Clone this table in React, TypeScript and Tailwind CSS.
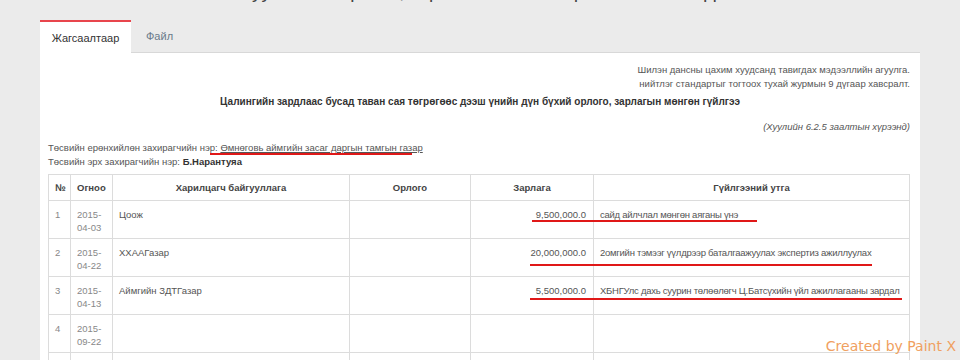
import React from 'react';

const rows = [
    { no: '1', date: ['2015-', '04-03'], org: 'Цоож', out: '9,500,000.0', desc: 'сайд айлчлал мөнгөн аяганы үнэ' },
    { no: '2', date: ['2015-', '04-22'], org: 'ХХААГазар', out: '20,000,000.0', desc: '2омгийн тэмээг үүлдрээр баталгаажуулах экспертиз ажиллуулах' },
    { no: '3', date: ['2015-', '04-13'], org: 'Аймгийн ЗДТГазар', out: '5,500,000.0', desc: 'ХБНГУлс дахь суурин төлөөлөгч Ц.Батсүхийн үйл ажиллагааны зардал' },
    { no: '4', date: ['2015-', '09-22'], org: '', out: '', desc: '' },
    { no: '', date: ['', ''], org: '', out: '', desc: '' },
];

export default function App() {
    return (
        <div className="relative h-[360px] w-[960px] overflow-hidden bg-[#ebebeb] font-['Liberation_Sans',Arial,sans-serif] text-[#555]">
            {/* Cut-off page heading */}
            <div className="-mt-[18px] h-[38px] text-center text-[19px] leading-[20px] text-[#444]">
                Төсвийн байгууллагын орлого, зарлагын мөнгөн гүйлгээ ба санхүүгийн тайлан
            </div>

            <div className="ml-[40px] w-[880px]">
                {/* Tabs */}
                <div className="flex h-[33px] items-stretch">
                    <div className="flex w-[91px] items-center justify-center border-t-2 border-[#e8454c] bg-white pt-[1px] text-[11px] text-[#333]">
                        Жагсаалтаар
                    </div>
                    <div className="flex flex-1 items-center border-b border-[#d8d8d8] pl-[15px] text-[11px] text-[#6a7a8a]">
                        Файл
                    </div>
                </div>

                {/* Panel */}
                <div className="h-[400px] bg-white px-[8px] pt-[10px]">
                    <div className="pr-[2px] text-right text-[9.5px] leading-[14px]">
                        <div>Шилэн дансны цахим хуудсанд тавигдах мэдээллийн агуулга.</div>
                        <div>нийтлэг стандартыг тогтоох тухай журмын 9 дүгаар хавсралт.</div>
                    </div>
                    <div className="mt-[4px] text-center text-[10px] font-bold leading-[14px] text-[#333]">
                        Цалингийн зардлаас бусад таван сая төгрөгөөс дээш үнийн дүн бүхий орлого, зарлагын мөнгөн гүйлгээ
                    </div>
                    <div className="mt-[11px] pr-[2px] text-right text-[9.5px] italic leading-[14px]">
                        (Хуулийн 6.2.5 заалтын хүрээнд)
                    </div>

                    <div className="mt-[7px] text-[9.5px] leading-[14px]">
                        <div className="relative">
                            Төсвийн ерөнхийлөн захирагчийн нэр:{' '}
                            <span className="underline">Өмнөговь аймгийн засаг даргын тамгын газар</span>
                            <div className="absolute left-[162px] top-[12px] h-[2px] w-[202px] bg-[#e01818]" />
                        </div>
                        <div>
                            Төсвийн эрх захирагчийн нэр: <span className="font-bold text-[#333]">Б.Нарантуяа</span>
                        </div>
                    </div>

                    {/* Table */}
                    <div className="relative mt-[5px] w-[862px]">
                        <table className="w-full table-fixed border-collapse text-[9.5px] leading-[13px]">
                            <colgroup>
                                <col className="w-[22px]" />
                                <col className="w-[42px]" />
                                <col className="w-[237px]" />
                                <col className="w-[121px]" />
                                <col className="w-[123px]" />
                                <col />
                            </colgroup>
                            <thead>
                                <tr className="h-[26px] font-bold text-[#444]">
                                    <th className="border border-[#dcdcdc] px-[6px] text-left">№</th>
                                    <th className="border border-[#dcdcdc] px-[6px] text-left">Огноо</th>
                                    <th className="border border-[#dcdcdc] text-center">Харилцагч байгууллага</th>
                                    <th className="border border-[#dcdcdc] text-center">Орлого</th>
                                    <th className="border border-[#dcdcdc] text-center">Зарлага</th>
                                    <th className="border border-[#dcdcdc] text-center">Гүйлгээний утга</th>
                                </tr>
                            </thead>
                            <tbody>
                                {rows.map((r, i) => (
                                    <tr key={i} className="h-[38px] align-top">
                                        <td className="border border-[#dcdcdc] px-[6px] pt-[7px] text-[#888]">{r.no}</td>
                                        <td className="border border-[#dcdcdc] px-[6px] pt-[7px] text-[#888]">
                                            {r.date[0]}
                                            <br />
                                            {r.date[1]}
                                        </td>
                                        <td className="border border-[#dcdcdc] px-[6px] pt-[7px]">{r.org}</td>
                                        <td className="border border-[#dcdcdc] px-[6px] pt-[7px]" />
                                        <td className="border border-[#dcdcdc] px-[7px] pt-[7px] text-right">{r.out}</td>
                                        <td className="whitespace-nowrap border border-[#dcdcdc] px-[6px] pt-[7px] tracking-[-0.25px]">{r.desc}</td>
                                    </tr>
                                ))}
                            </tbody>
                        </table>

                        {/* Red annotation lines */}
                        <div className="absolute left-[484px] top-[46px] h-[2px] w-[225px] bg-[#e01818]" />
                        <div className="absolute left-[482px] top-[90px] h-[2px] w-[342px] bg-[#e01818]" />
                        <div className="absolute left-[482px] top-[124px] h-[2px] w-[372px] bg-[#e01818]" />
                    </div>
                </div>
            </div>

            <div className="absolute right-[4px] top-[337px] font-['DejaVu_Sans',sans-serif] text-[14px] leading-[18px] text-[#f0a060]">
                Created by Paint X
            </div>
        </div>
    );
}
